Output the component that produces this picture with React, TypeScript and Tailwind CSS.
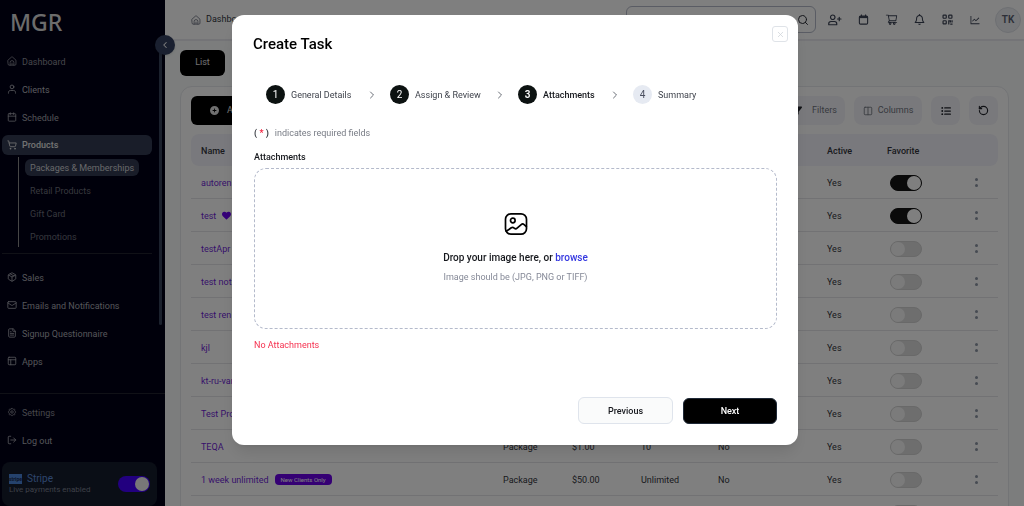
import React from "react";
import {
  Calendar,
  ChevronLeft,
  ChevronRight,
  Columns2,
  FileText,
  LogOut,
  Mail,
  Package,
  PanelsTopLeft,
  RotateCcw,
  Search,
  ShoppingCart,
  X,
} from "lucide-react";
import { FaCirclePlus, FaHeart, FaListUl, FaFilter, FaRegBell } from "react-icons/fa6";
import { AiOutlineLineChart, AiOutlineShoppingCart } from "react-icons/ai";
import { TbSettings } from "react-icons/tb";

type IconProps = { className?: string };

function HomeIcon({ className }: IconProps) {
  return (
    <svg viewBox="0 0 24 24" fill="none" stroke="currentColor" strokeWidth="2" strokeLinecap="round" strokeLinejoin="round" className={className} aria-hidden="true">
      <path d="M2.500 10 10.500 2.800a2.200 2.200 0 0 1 3 0L21.500 10v9.500a2.500 2.500 0 0 1-2.500 2.500H5a2.500 2.500 0 0 1-2.500-2.500z" />
      <path d="M7.500 22v-6.500a4.500 4.500 0 0 1 9 0V22" />
      <path d="M12 17v4" />
    </svg>
  );
}

function PersonIcon({ className }: IconProps) {
  return (
    <svg viewBox="0 0 24 24" fill="none" stroke="currentColor" strokeWidth="2" strokeLinecap="round" strokeLinejoin="round" className={className} aria-hidden="true">
      <circle cx="12" cy="7" r="4.500" />
      <path d="M3.500 22v-1.500c0-3 2-5 5-5h7c3 0 5 2 5 5V22" />
    </svg>
  );
}

function UserPlusIcon({ className }: IconProps) {
  return (
    <svg viewBox="0 0 28 24" fill="none" stroke="currentColor" strokeWidth="2.400" strokeLinecap="round" strokeLinejoin="round" className={className} aria-hidden="true">
      <circle cx="9.500" cy="6.500" r="4.500" />
      <path d="M6 15h7a4.500 4.500 0 0 1 4.500 4.500v2h-16v-2A4.500 4.500 0 0 1 6 15z" />
      <path d="M22.500 6.500v7M19 10h7" />
    </svg>
  );
}

function CalendarBoldIcon({ className }: IconProps) {
  return (
    <svg viewBox="0 0 24 24" fill="none" stroke="currentColor" strokeWidth="2.400" strokeLinejoin="round" className={className} aria-hidden="true">
      <rect x="3" y="4.500" width="18" height="17.500" rx="2.500" />
      <path d="M3 4.500h18V9H3z" fill="currentColor" stroke="none" />
      <path d="M7.500 1v5M16.500 1v5" />
    </svg>
  );
}

function QrIcon({ className }: IconProps) {
  return (
    <svg viewBox="0 0 24 24" fill="none" stroke="currentColor" strokeWidth="2.600" className={className} aria-hidden="true">
      <rect x="2.300" y="2.300" width="7" height="7" rx="1.500" />
      <rect x="14.700" y="2.300" width="7" height="7" rx="1.500" />
      <rect x="2.300" y="14.700" width="7" height="7" rx="1.500" />
      <path d="M13.500 14.800h5v4M22 13.500v5M14.800 13.500V23M18 22h5" />
    </svg>
  );
}

function ImageIcon({ className }: IconProps) {
  return (
    <svg viewBox="0 0 24 24" fill="none" stroke="currentColor" strokeWidth="1.700" strokeLinecap="round" strokeLinejoin="round" className={className} aria-hidden="true">
      <rect x="1.500" y="1.800" width="21" height="20.400" rx="5.500" />
      <circle cx="8.800" cy="8.500" r="2.300" />
      <path d="m2.300 19.300 5-3.500c.8-.5 1.900-.5 2.600.1l.4.3c.8.700 2 .7 2.800 0l4.100-3.600c.8-.7 2.100-.7 2.900 0l2.200 1.900" />
    </svg>
  );
}

const topLinks = [
  { label: "Dashboard", icon: HomeIcon, tone: "text-[#8b8d98]" },
  { label: "Clients", icon: PersonIcon, tone: "text-[#b4b6be]" },
  { label: "Schedule", icon: Calendar, tone: "text-[#a3a5ae]" },
];

const lowerLinks = [
  { label: "Sales", icon: Package },
  { label: "Emails and Notifications", icon: Mail },
  { label: "Signup Questionnaire", icon: FileText },
  { label: "Apps", icon: PanelsTopLeft },
];

function NavLink({ label, icon: Icon, tone = "text-[#a9abb4]" }: { label: string; icon: React.ElementType; tone?: string }) {
  return (
    <a href="#" className={`flex h-5 items-center gap-[5px] pl-[5px] ${tone}`}>
      <Icon className="size-[10px]" />
      <span className="pt-px whitespace-nowrap">{label}</span>
    </a>
  );
}

function Sidebar() {
  return (
    <aside className="relative z-10 flex w-[165px] shrink-0 flex-col bg-[#010016] text-[9px] leading-[14px]">
      <div className="h-[51px] pt-1 pl-[10px] font-['Noto_Sans',sans-serif] text-[23px] leading-[37px] font-medium text-[#d8d8d8]">MGR</div>
      <div className="absolute top-[45px] right-[3px] h-[280px] w-[3px] rounded-full bg-[#37435b]" />
      <button type="button" aria-label="Collapse menu" className="absolute top-[35px] -right-[10px] flex size-5 items-center justify-center rounded-full bg-[#344060] text-white shadow">
        <ChevronLeft className="size-[10px]" strokeWidth={2.5} />
      </button>
      <nav className="flex flex-1 flex-col">
        <div className="flex flex-col gap-2 pr-[13px] pl-[2px]">
          {topLinks.map((l) => (
            <NavLink key={l.label} {...l} />
          ))}
          <a href="#" className="flex h-5 items-center gap-[5px] rounded-md bg-[#323b53] pl-[5px] font-medium text-[#e4e4e4]">
            <ShoppingCart className="size-[10px]" />
            Products
          </a>
        </div>
        <div className="mt-[2px] ml-[18px] flex h-[90px] flex-col items-start gap-[6px] border-l border-[#8d8d8d] pt-[2px] pl-[6px]">
          <a href="#" className="flex h-[17px] items-center rounded-md bg-[#323b53] px-[5px] whitespace-nowrap text-[#cfd0d4]">Packages &amp; Memberships</a>
          <a href="#" className="flex h-[17px] items-center px-[5px] text-[#6d707c]">Retail Products</a>
          <a href="#" className="flex h-[17px] items-center px-[5px] text-[#6d707c]">Gift Card</a>
          <a href="#" className="flex h-[17px] items-center px-[5px] text-[#6d707c]">Promotions</a>
        </div>
        <div className="mt-[6px] mr-[13px] mb-[13px] ml-[2px] border-t border-[#20222f]" />
        <div className="flex flex-col gap-2 pr-[13px] pl-[2px]">
          {lowerLinks.map((l) => (
            <NavLink key={l.label} {...l} />
          ))}
        </div>
      </nav>
      <div className="flex flex-col gap-2 border-t border-[#20222f] pt-2 pb-3 pl-[2px]">
        <NavLink label="Settings" icon={TbSettings} tone="text-[#8b8d98]" />
        <NavLink label="Log out" icon={LogOut} />
      </div>
      <div className="mr-2 ml-[2px] flex h-[44px] items-center justify-between rounded-lg bg-[#151c2c] pr-[7px] pl-[7px]">
        <div>
          <div className="flex items-center gap-[5px] text-[10px] leading-[12px] text-[#5b8bd8]">
            <span className="flex h-[10px] w-[13px] items-center justify-center bg-[#4a84d8] text-[5px] font-bold text-[#17254a]">stripe</span>
            Stripe
          </div>
          <div className="text-[8px] leading-[10px] text-[#7b8090]">Live payments enabled</div>
        </div>
        <label className="flex h-4 w-8 justify-end rounded-full bg-[#4400ff] p-px">
          <input type="checkbox" defaultChecked aria-label="Live payments" className="peer sr-only" />
          <span className="size-[14px] rounded-full bg-[#f0f0f0]" />
        </label>
      </div>
    </aside>
  );
}

const headerActions = [
  { label: "Add client", icon: UserPlusIcon, size: "h-3 w-[14px]" },
  { label: "Calendar", icon: CalendarBoldIcon, size: "size-[11px]" },
  { label: "Cart", icon: AiOutlineShoppingCart, size: "size-[13px]" },
  { label: "Notifications", icon: FaRegBell, size: "size-[11px]" },
  { label: "QR code", icon: QrIcon, size: "size-[11px]" },
  { label: "Reports", icon: AiOutlineLineChart, size: "size-[12px]" },
];

function Header() {
  return (
    <header className="flex h-[41px] shrink-0 items-center border-b-2 border-[#e8e8ee] bg-white pr-[3px] pl-[26px]">
      <a href="#" className="flex items-center gap-[5px] text-[9px] text-[#33363f]">
        <HomeIcon className="size-[10px] text-[#6b7080]" />
        Dashboard
      </a>
      <label className="ml-auto flex h-[27px] w-[190px] items-center rounded-md border border-[#b4b9c8] pr-[6px]">
        <input type="search" aria-label="Search" className="min-w-0 flex-1 bg-transparent px-2 text-[9px] outline-none" />
        <Search className="size-3 text-[#2a2d36]" />
      </label>
      <div className="ml-[5px] flex">
        {headerActions.map(({ label, icon: Icon, size }) => (
          <button key={label} type="button" aria-label={label} className="flex h-7 w-[28px] items-center justify-center text-[#3b4254]">
            <Icon className={size} />
          </button>
        ))}
      </div>
      <button type="button" className="ml-[6px] size-[26px] rounded-full border border-[#dcdfe6] bg-[#eceef2] text-[10px] font-semibold text-[#5b6070]">TK</button>
    </header>
  );
}

type Row = { name: string; type?: string; price?: string; count?: string; online?: string; fav: boolean; heart?: boolean; tag?: string };

const rows: Row[] = [
  { name: "autoren", fav: true },
  { name: "test", fav: true, heart: true },
  { name: "testApr", fav: false },
  { name: "test not", fav: false },
  { name: "test ren", fav: false },
  { name: "kjl", fav: false },
  { name: "kt-ru-var", fav: false },
  { name: "Test Prod", fav: false },
  { name: "TEQA", type: "Package", price: "$1.00", count: "10", online: "No", fav: false },
  { name: "1 week unlimited", type: "Package", price: "$50.00", count: "Unlimited", online: "No", fav: false, tag: "New Clients Only" },
  { name: "", fav: false },
];

function Toggle({ on, name }: { on: boolean; name: string }) {
  return (
    <label className={`ml-[3px] flex h-4 w-8 items-center rounded-full border ${on ? "justify-end border-[#141414] bg-[#141414]" : "border-[#d2d2d2] bg-[#dcdcdc]"}`}>
      <input type="checkbox" defaultChecked={on} aria-label={`Favorite ${name}`} className="sr-only" />
      <span className={`size-[14px] rounded-full ${on ? "bg-white" : "bg-[#f6f6f6]"}`} />
    </label>
  );
}

function ProductTable() {
  return (
    <table className="mt-[9px] w-full table-fixed border-separate border-spacing-0 text-left text-[9px] leading-[14px] text-[#33353c]">
      <colgroup>
        <col />
        <col className="w-[69px]" />
        <col className="w-[69px]" />
        <col className="w-[77px]" />
        <col className="w-[109px]" />
        <col className="w-[60px]" />
        <col className="w-[90px]" />
        <col className="w-[31px]" />
      </colgroup>
      <thead>
        <tr className="h-8 [&>th]:bg-[#f3f3fa] [&>th]:px-[10px] [&>th]:pt-[2px] [&>th]:pb-0 [&>th]:font-medium">
          <th className="rounded-l-lg">Name</th>
          <th colSpan={4} />
          <th>Active</th>
          <th>Favorite</th>
          <th className="rounded-r-lg" aria-label="Actions" />
        </tr>
      </thead>
      <tbody>
        {rows.map((r, i) => (
          <tr key={i} className="h-[33px] [&>td]:border-b [&>td]:border-[#e4e4e8] [&>td]:px-[10px] [&>td]:pt-px [&>td]:pb-0">
            <td>
              <div className="flex items-center gap-[6px] whitespace-nowrap">
                <a href="#" className="text-[#6f1fd6]">{r.name}</a>
                {r.heart && <FaHeart className="size-[9px] text-[#6a00f0]" />}
                {r.tag && <span className="flex h-[11px] items-center rounded-sm bg-[#6a00e8] px-[6px] text-[6px] text-white">{r.tag}</span>}
              </div>
            </td>
            <td>{r.type}</td>
            <td>{r.price}</td>
            <td>{r.count}</td>
            <td>{r.online}</td>
            <td>{r.name && "Yes"}</td>
            <td>
              <Toggle on={r.fav} name={r.name} />
            </td>
            <td>
              <button type="button" aria-label="More actions" className="-ml-[2px] flex h-4 flex-col items-center justify-center gap-[3px]">
                <span className="size-[3px] rounded-full bg-[#8d96a4]" />
                <span className="size-[3px] rounded-full bg-[#8d96a4]" />
              </button>
            </td>
          </tr>
        ))}
      </tbody>
    </table>
  );
}

function Page() {
  const tool = "flex h-[29px] items-center justify-center rounded-lg bg-[#f3f3f8] text-[#6f737e]";
  return (
    <main className="flex-1 overflow-hidden bg-[#f8fbfa] px-[15px] pt-[9px]">
      <button type="button" className="block h-[26px] w-[45px] rounded-md bg-black text-[9px] text-[#e0e0e0]">List</button>
      <section className="mt-[10px] rounded-t-xl border border-[#e6e8ec] bg-white p-[10px] pt-[9px]">
        <div className="flex gap-[9px] text-[9px]">
          <button type="button" className="mr-auto flex h-[29px] w-[140px] items-center gap-2 rounded-md bg-black pl-[19px] text-[#e0e0e0]">
            <FaCirclePlus className="size-[9px]" />
            Add
          </button>
          <button type="button" className={`${tool} w-[68px] gap-[10px] pl-[8px]`}>
            <FaFilter className="size-[9px] text-[#20232b]" />
            Filters
          </button>
          <button type="button" className={`${tool} w-[68px] gap-[5px]`}>
            <Columns2 className="size-[10px]" />
            Columns
          </button>
          <button type="button" aria-label="List view" className={`${tool} w-[29px]`}>
            <FaListUl className="size-[10px] text-[#20232b]" />
          </button>
          <button type="button" aria-label="Refresh" className={`${tool} w-[29px]`}>
            <RotateCcw className="size-[11px] text-[#20232b]" strokeWidth={2.5} />
          </button>
        </div>
        <ProductTable />
      </section>
    </main>
  );
}

const steps = [
  { label: "General Details", state: "done" },
  { label: "Assign & Review", state: "done" },
  { label: "Attachments", state: "current" },
  { label: "Summary", state: "next" },
];

function Stepper() {
  return (
    <ol className="mt-[29px] ml-[12px] grid grid-cols-[124px_128px_115px_1fr] text-[9px] leading-[14px]">
      {steps.map((s, i) => (
        <li key={s.label} className="flex h-[19px] items-center gap-[6px]">
          <span className={`flex size-[19px] shrink-0 items-center justify-center rounded-full text-[10px] ${s.state === "next" ? "bg-[#e6eaf2] text-[#4b5060]" : "bg-[#0c1211] text-white"} ${s.state === "current" ? "font-semibold" : ""}`}>{i + 1}</span>
          <span className={`whitespace-nowrap ${s.state === "current" ? "font-medium text-[#16181d]" : "text-[#3f434c]"}`}>{s.label}</span>
          {i < steps.length - 1 && <ChevronRight className="mr-3 ml-auto size-3 shrink-0 text-[#555a64]" strokeWidth={1.75} />}
        </li>
      ))}
    </ol>
  );
}

function CreateTaskDialog() {
  return (
    <div className="fixed inset-0 z-20 flex items-start justify-center bg-black/50 pt-[15px] pl-[6px]">
      <div role="dialog" aria-modal="true" aria-labelledby="dialog-title" className="relative flex min-h-[430px] w-full max-w-[566px] flex-col rounded-xl bg-white px-[22px] pt-[17px] pr-[21px] pb-[21px] shadow-lg">
        <h1 id="dialog-title" className="-ml-px text-[15px] leading-6 font-medium text-black">Create Task</h1>
        <button type="button" aria-label="Close" className="absolute top-[11px] right-[10px] flex size-4 items-center justify-center rounded-[3px] border border-[#dfe3e8] text-[#cfd4da]">
          <X className="size-[9px]" />
        </button>
        <Stepper />
        <p className="mt-[21px] flex items-center gap-[6px] text-[9px] leading-4 text-[#777b84]">
          <span className="font-semibold text-[#33363d]">
            ( <span className="text-[#f5233f]">*</span> )
          </span>
          indicates required fields
        </p>
        <label htmlFor="file" className="mt-2 text-[9px] leading-4 font-medium text-[#16181d]">Attachments</label>
        <div className="mt-[3px] flex h-[161px] flex-col items-center rounded-xl border border-dashed border-[#b4bacb] pt-[43px]">
          <ImageIcon className="size-6 text-black" />
          <p className="mt-[14px] text-[10px] leading-4 font-medium text-[#16181d]">
            Drop your image here, or <label htmlFor="file" className="cursor-pointer text-[#3538e0]">browse</label>
          </p>
          <input id="file" type="file" className="sr-only" />
          <p className="mt-[3px] text-[9px] leading-4 text-[#858997]">Image should be (JPG, PNG or TIFF)</p>
        </div>
        <p className="mt-2 text-[9px] leading-4 text-[#f5314f]">No Attachments</p>
        <div className="mt-auto flex items-center justify-end gap-[10px] text-[9px] leading-[14px] font-medium">
          <button type="button" className="h-[27px] w-[95px] rounded-md border border-[#dfe4ec] bg-[#fafbfb] text-[#16181d]">Previous</button>
          <button type="button" className="h-[26px] w-[94px] rounded-md border border-[#1f2937] bg-black text-white">Next</button>
        </div>
      </div>
    </div>
  );
}

export default function App() {
  return (
    <div className="flex h-screen overflow-hidden bg-[#f8fbfa] font-['Roboto','Noto_Sans',sans-serif]">
      <Sidebar />
      <div className="flex min-w-0 flex-1 flex-col">
        <Header />
        <Page />
      </div>
      <CreateTaskDialog />
    </div>
  );
}
